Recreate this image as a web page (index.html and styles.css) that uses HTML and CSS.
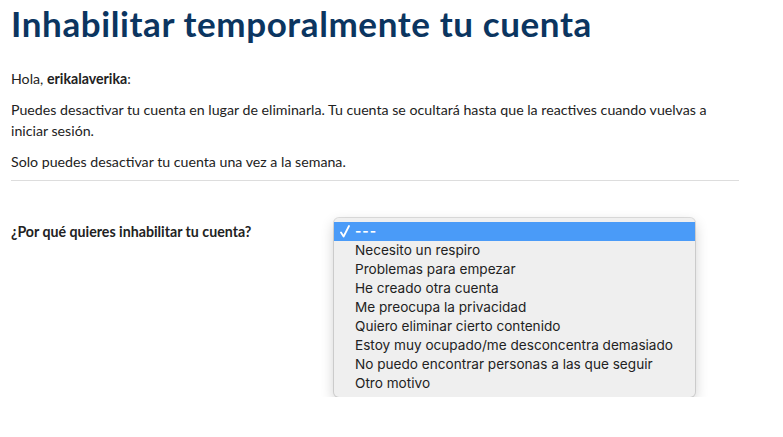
FILE: index.html
```html
<!DOCTYPE html>
<html lang="es">
<head>
<meta charset="utf-8">
<link rel="stylesheet" href="styles.css">
</head>
<body>
<main class="page">
  <h1 class="title">Inhabilitar temporalmente tu cuenta</h1>
  <p class="greet">Hola, <strong>erikalaverika</strong>:</p>
  <p class="text">Puedes desactivar tu cuenta en lugar de eliminarla. Tu cuenta se ocultará hasta que la reactives cuando vuelvas a iniciar sesión.</p>
  <p class="text">Solo puedes desactivar tu cuenta una vez a la semana.</p>
  <hr class="divider">
  <div class="form-row">
    <label class="label">¿Por qué quieres inhabilitar tu cuenta?</label>
    <div class="menu">
      <div class="opt selected"><svg class="check" width="10" height="13" viewBox="0 0 10 13"><path d="M1 7.5 L3.6 11.5 L9 1" fill="none" stroke="#fff" stroke-width="1.8" stroke-linecap="round" stroke-linejoin="round"/></svg><span class="dashes">---</span></div>
      <div class="opt">Necesito un respiro</div>
      <div class="opt">Problemas para empezar</div>
      <div class="opt">He creado otra cuenta</div>
      <div class="opt">Me preocupa la privacidad</div>
      <div class="opt">Quiero eliminar cierto contenido</div>
      <div class="opt">Estoy muy ocupado/me desconcentra demasiado</div>
      <div class="opt">No puedo encontrar personas a las que seguir</div>
      <div class="opt">Otro motivo</div>
    </div>
  </div>
</main>
</body>
</html>
```
FILE: styles.css
```css
html, body { margin: 0; padding: 0; background: #fff; }
body { font-family: "Lato", "Open Sans", sans-serif; color: #222; }
.page { padding: 0 44px 0 11px; }
.title { margin: 0; padding-top: 3px; font-size: 35px; font-weight: 700; color: #0b3560; line-height: 40px; letter-spacing: 0.6px; }
.greet, .text { font-size: 14.2px; line-height: 21px; margin: 0; }
.greet { margin-top: 25px; }
.text { margin-top: 10px; }
.greet strong { font-weight: 700; }
.divider { border: 0; border-top: 1px solid #dddddd; margin: 8px 0 0 0; }
.form-row { display: flex; margin-top: 37px; }
.label { width: 323px; font-size: 14.2px; font-weight: 700; line-height: 21px; margin-top: 3px; }
.menu { width: 361px; background: #efefef; border-radius: 5px; padding: 4px 0 4px; box-shadow: 0 0 0 1px rgba(0,0,0,0.12), 0 5px 14px rgba(0,0,0,0.2); font-family: "Inter", "Liberation Sans", sans-serif; font-size: 13.6px; color: #222; }
.opt { height: 19px; line-height: 19px; padding-left: 21px; position: relative; white-space: nowrap; }
.opt.selected { background: #4a9bf8; color: #fff; }
.check { position: absolute; left: 6px; top: 3px; }
.dashes { font-weight: 700; letter-spacing: 1px; }
```
